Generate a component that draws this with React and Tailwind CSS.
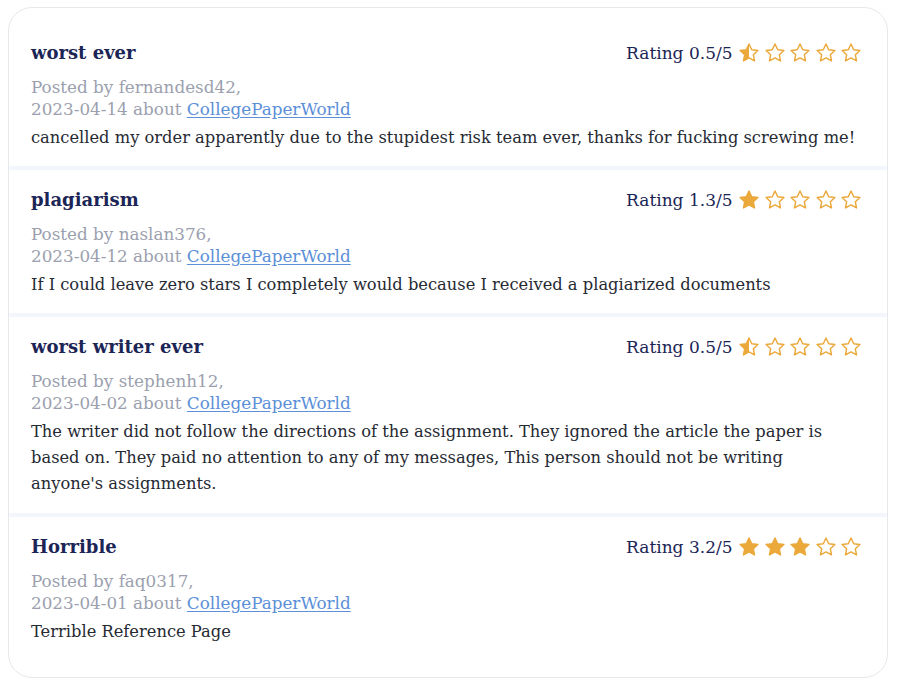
import React from "react";

const reviews = [
  {
    title: "worst ever",
    rating: "0.5",
    stars: ["half", "empty", "empty", "empty", "empty"],
    user: "fernandesd42",
    date: "2023-04-14",
    body: "cancelled my order apparently due to the stupidest risk team ever, thanks for fucking screwing me!",
  },
  {
    title: "plagiarism",
    rating: "1.3",
    stars: ["full", "empty", "empty", "empty", "empty"],
    user: "naslan376",
    date: "2023-04-12",
    body: "If I could leave zero stars I completely would because I received a plagiarized documents",
  },
  {
    title: "worst writer ever",
    rating: "0.5",
    stars: ["half", "empty", "empty", "empty", "empty"],
    user: "stephenh12",
    date: "2023-04-02",
    body: "The writer did not follow the directions of the assignment. They ignored the article the paper is based on. They paid no attention to any of my messages, This person should not be writing anyone's assignments.",
  },
  {
    title: "Horrible",
    rating: "3.2",
    stars: ["full", "full", "full", "empty", "empty"],
    user: "faq0317",
    date: "2023-04-01",
    body: "Terrible Reference Page",
  },
];

const STAR =
  "M12 2.2l2.95 6.2 6.75.85-4.95 4.7 1.25 6.75L12 17.4l-6 3.3 1.25-6.75L2.3 9.25l6.75-.85z";

function Star({ type, id }) {
  return (
    <svg width="22" height="22" viewBox="0 0 24 24" className="shrink-0">
      {type === "half" && (
        <defs>
          <linearGradient id={id} x1="0" x2="1" y1="0" y2="0">
            <stop offset="50%" stopColor="#eba93c" />
            <stop offset="50%" stopColor="#ffffff" stopOpacity="0" />
          </linearGradient>
        </defs>
      )}
      <path
        d={STAR}
        fill={type === "full" ? "#eba93c" : type === "half" ? `url(#${id})` : "none"}
        stroke="#eba93c"
        strokeWidth="1.6"
        strokeLinejoin="round"
      />
    </svg>
  );
}

export default function App() {
  return (
    <div
      className="w-[900px] h-[689px] bg-white pt-[7px] pl-[8px]"
      style={{ fontFamily: '"DejaVu Serif", serif' }}
    >
      <div className="w-[880px] rounded-[24px] border border-[#e6e8ec] bg-white pt-[15px] pb-[17px] overflow-hidden">
        {reviews.map((r, i) => (
          <div
            key={i}
            className={
              i === 2
                ? "px-[22px] pt-[16px] pb-[16px] border-b-4 border-[#f3f6fc]"
                : i < reviews.length - 1
                ? "px-[22px] pt-[16px] pb-[15px] border-b-4 border-[#f3f6fc]"
                : "px-[22px] pt-[16px] pb-[15px]"
            }
          >
            <div className="flex items-center justify-between h-[28px]">
              <h2 className="text-[18px] font-bold leading-[28px] text-[#1b2556]">{r.title}</h2>
              <div className="flex items-center gap-[3.5px] pr-[3px]">
                <span className="text-[17px] leading-[28px] text-[#1b2556] mr-[2px]">
                  Rating {r.rating}/5
                </span>
                {r.stars.map((s, j) => (
                  <Star key={j} type={s} id={`half-${i}-${j}`} />
                ))}
              </div>
            </div>
            <div className="mt-[9px] text-[16.8px] leading-[22px] text-[#9b9fae]">
              <div>Posted by {r.user},</div>
              <div>
                {r.date} about{" "}
                <a href="#" className="text-[#5b8fd8] underline underline-offset-2">
                  CollegePaperWorld
                </a>
              </div>
            </div>
            <p className="mt-[5px] max-w-[828px] text-[16.3px] leading-[26px] text-[#262a33]">{r.body}</p>
          </div>
        ))}
      </div>
    </div>
  );
}
